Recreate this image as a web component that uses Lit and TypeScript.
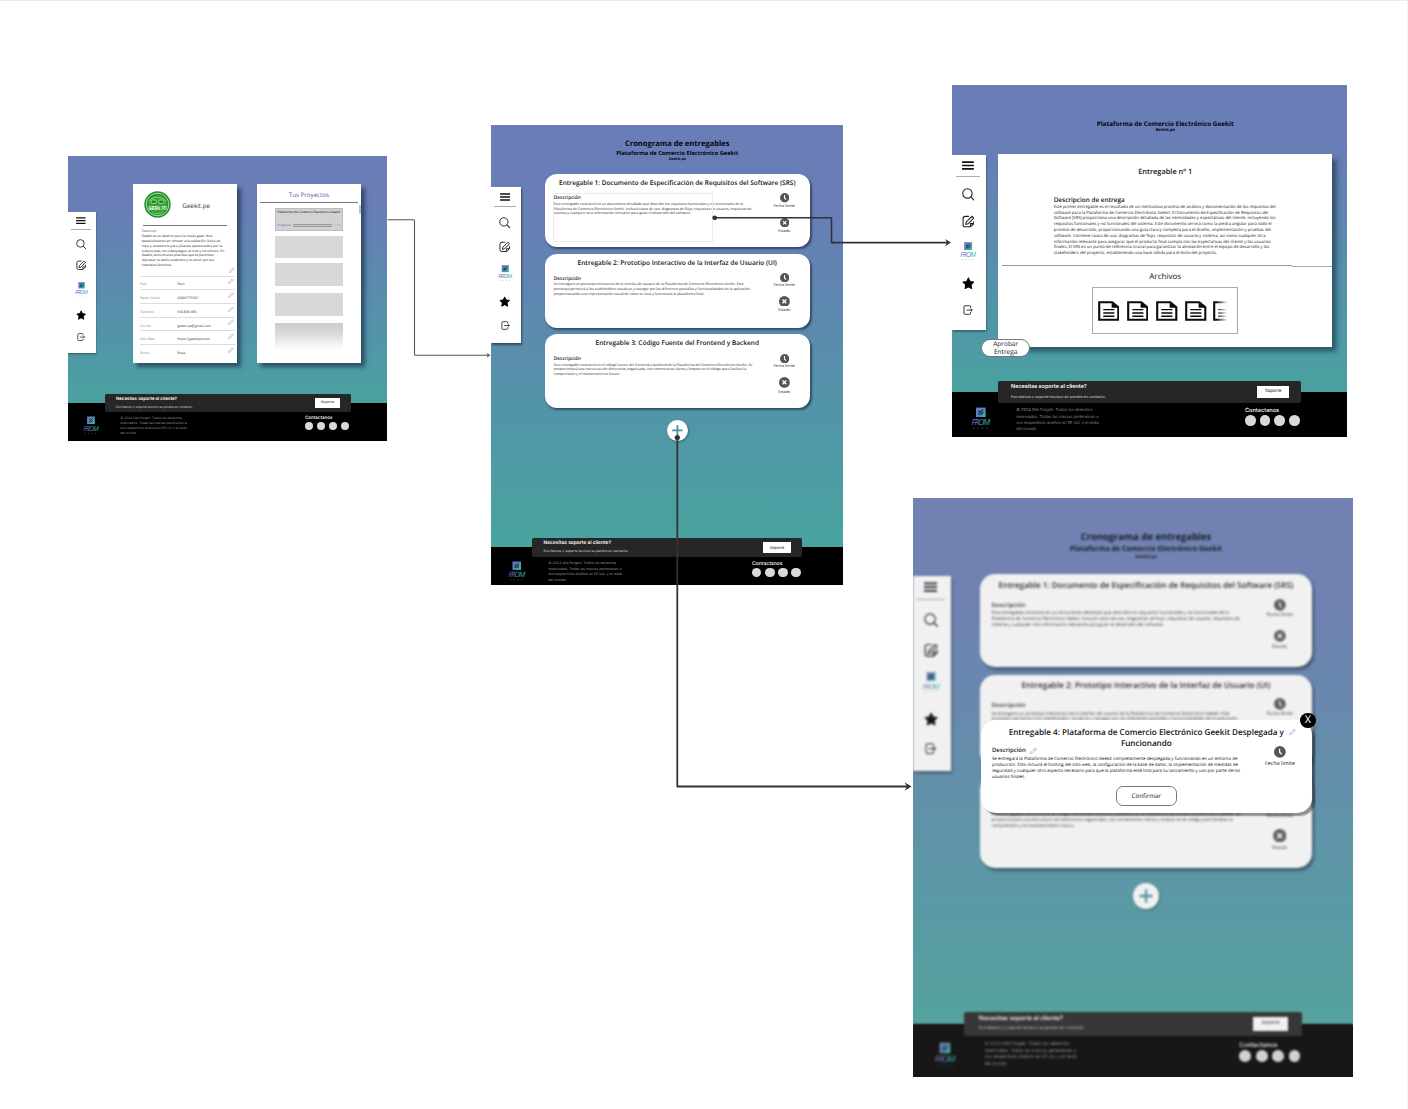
import { LitElement, html, svg, css } from "lit";
import { customElement, property } from "lit/decorators.js";

const PLATFORM = "Plataforma de Comercio Electrónico Geekit";

const pencil = html`<svg class="pencil" viewBox="0 0 12 12"><path d="M.8 11.2 L2 8 L8.6 1.8 L10.8 3.8 L4 10 Z M7.2 3.2 L9.4 5.2" fill="none" stroke="#b191e0" stroke-width="1.1"/></svg>`;
const clock = html`<svg class="clock" viewBox="0 0 20 20"><circle cx="10" cy="10" r="10" fill="#555"/><path d="M9.6 4.5 V10.5 L13 14" fill="none" stroke="#fff" stroke-width="2.2"/></svg>`;
const cross = (cls: string) => html`<svg class=${cls} viewBox="0 0 20 20"><circle cx="10" cy="10" r="10" fill="#555"/><path d="M6.5 6.5 L13.5 13.5 M13.5 6.5 L6.5 13.5" stroke="#fff" stroke-width="2.4"/></svg>`;
const lines = (rows: string[]) => rows.map((r) => html`<div class="ln">${r}</div>`);

@customElement("frog-logo")
export class FrogLogo extends LitElement {
  static styles = css`
    :host { display: block; width: 18px; height: 20px; }
    svg { display: block; width: 100%; height: 100%; overflow: visible; }
    .word { font: italic 500 7.6px "Open Sans", sans-serif; }
  `;
  render() {
    return html`<svg viewBox="0 0 18 20">
      <defs>
        <linearGradient id="sq" x1="0" y1="0" x2="1" y2="1"><stop offset="0" stop-color="#7c66bd"/><stop offset=".5" stop-color="#4f8db3"/><stop offset="1" stop-color="#36c0a0"/></linearGradient>
        <linearGradient id="wd" x1="0" y1="0" x2="1" y2="0"><stop offset="0" stop-color="#8a5fd0"/><stop offset=".5" stop-color="#4c8fc0"/><stop offset="1" stop-color="#27c795"/></linearGradient>
      </defs>
      <rect x="4.6" y="0" width="8.8" height="8.6" fill="url(#sq)"/>
      <path d="M6.6 6.6 L11 2 M7 4 C8 2 9 4.4 8 5.4 M8.4 6.4 C10 6.6 10.6 5 11.4 4.2" fill="none" stroke="#17324e" stroke-width="1.1"/>
      <text class="word" x="0.4" y="16.3" textLength="17.2" fill="url(#wd)">FROM</text>
      <path d="M2 19 h1 M6 19 h1 M10 19 h1 M14 19 h1" stroke="#5f9bbb" stroke-width=".8" stroke-opacity=".8"/>
    </svg>`;
  }
}

@customElement("side-rail")
export class SideRail extends LitElement {
  static styles = css`
    :host { display: block; zoom: var(--k); flex: none; }
    .rail { box-sizing: border-box; width: 30.4px; height: 156px; padding-right: 1.4px; background: #fff; box-shadow: 0.5px 1.5px 2px rgba(0,0,0,.45);
      display: flex; flex-direction: column; align-items: center; }
    svg { display: block; flex: none; }
    .menu { width: 10.6px; height: 8px; margin-top: 5.2px; }
    .rule { width: 22px; height: .7px; background: #aaa; margin-top: 5.6px; }
    .search { width: 11.5px; height: 11.5px; margin-top: 10.3px; }
    .edit { width: 11.5px; height: 11.5px; margin-top: 12.3px; }
    frog-logo { width: 14.5px; height: 16.5px; margin-top: 12.4px; }
    .star { width: 11.4px; height: 11.4px; margin-top: 14.8px; }
    .exit { width: 9px; height: 9px; margin-top: 13.4px; }
  `;
  render() {
    return html`<nav class="rail">
      <svg class="menu" viewBox="0 0 21 16"><path d="M0 2 H21 M0 8 H21 M0 14 H21" stroke="#111" stroke-width="2.8"/></svg>
      <div class="rule"></div>
      <svg class="search" viewBox="0 0 22 22"><circle cx="9.3" cy="9.3" r="8" fill="none" stroke="#222" stroke-width="1.8"/><path d="M15 15 L21 21" stroke="#222" stroke-width="2"/></svg>
      <svg class="edit" viewBox="0 0 24 24" fill="none" stroke="#1c1c1c" stroke-width="2"><path d="M13 2.5 H6 Q2 2.5 2 6.5 V18 Q2 22 6 22 H16 L22 16 V11"/><path d="M7 17.5 L8 13 L18.5 2.5 L22 5.5 L11.5 16.5 Z M16 21.5 V16 H21.5"/></svg>
      <frog-logo></frog-logo>
      <svg class="star" viewBox="0 0 24 24"><path d="M12 2 L15.1 8.4 L22 9.4 L17 14.4 L18.2 21.6 L12 18.2 L5.8 21.6 L7 14.4 L2 9.4 L8.9 8.4 Z" fill="#000" stroke="#000" stroke-width="2" stroke-linejoin="round"/></svg>
      <svg class="exit" viewBox="0 0 20 20" fill="none" stroke="#222" stroke-width="1.8"><path d="M15 6 V3.5 Q15 1.5 13 1.5 H4 Q2 1.5 2 3.5 V16.5 Q2 18.5 4 18.5 H13 Q15 18.5 15 16.5 V14 M7 10 H18.5 M15.6 7 L18.6 10 L15.6 13"/></svg>
    </nav>`;
  }
}

@customElement("site-footer")
export class SiteFooter extends LitElement {
  static styles = css`
    :host { display: block; zoom: var(--k); width: 352px; height: 42.4px; font-family: Inter, "Open Sans", sans-serif; text-rendering: geometricPrecision; white-space: nowrap; }
    .foot { height: 100%; background: #000; display: flex; flex-direction: column; }
    .bar { flex: none; box-sizing: border-box; margin: -9.4px 0 0 41px; width: 270.6px; height: 19.2px; border-radius: 1.8px; background: #262626; padding: 0 11.3px 0 11.9px;
      display: flex; justify-content: space-between; align-items: center; }
    .ask { color: #fff; font-weight: 600; font-size: 4.85px; line-height: 7px; padding-top: .8px; }
    .sub { color: #d5d5d5; font-size: 3.4px; line-height: 7px; padding-top: 1px; }
    .btn { width: 28px; height: 11px; background: #fff; color: #222; font-size: 3.9px; line-height: 11px; text-align: center; }
    .row { display: flex; padding: 4.3px 0 0 17px; }
    frog-logo { width: 17.5px; height: 20.5px; }
    .copy { margin-left: 23px; width: 203.8px; color: #8d8d8d; font-size: 3.56px; line-height: 5.5px; }
    .contact { color: #fff; font-size: 5px; font-weight: 500; line-height: 6px; padding-top: .3px; }
    .dots { display: flex; gap: 3.75px; margin-top: .4px; }
    .dot { width: 9.4px; height: 9.4px; border-radius: 50%; background: #d9d9d9; }
  `;
  render() {
    return html`<footer class="foot">
      <div class="bar">
        <div><div class="ask">Necesitas soporte al cliente?</div><div class="sub">Escribenos y soporte tecnico se pondra en contacto.</div></div>
        <div class="btn">Soporte</div>
      </div>
      <div class="row">
        <frog-logo></frog-logo>
        <div class="copy">${lines(["© 2024 Site Forgeh. Todos los derechos", "reservados. Todas las marcas pertenecen a", "sus respectivos dueños en EE.UU. y el resto", "del mundo"])}</div>
        <div><div class="contact">Contactanos</div>
          <div class="dots">${[0, 1, 2, 3].map(() => html`<div class="dot"></div>`)}</div></div>
      </div>
    </footer>`;
  }
}

interface Deliverable { title: string; body: string[]; cls: string; }
const DELIVERABLES: Deliverable[] = [
  { title: "Entregable 1: Documento de Especificación de Requisitos del Software (SRS)", cls: "first",
    body: ["Este entregable consistirá en un documento detallado que describe los requisitos funcionales y no funcionales de la", "Plataforma de Comercio Electrónico Geekit. Incluirá casos de uso, diagramas de flujo, requisitos de usuario, requisitos de", "sistema y cualquier otra información relevante para guiar el desarrollo del software."] },
  { title: "Entregable 2: Prototipo Interactivo de la Interfaz de Usuario (UI)", cls: "second",
    body: ["Se entregará un prototipo interactivo de la interfaz de usuario de la Plataforma de Comercio Electrónico Geekit. Este", "prototipo permitirá a los stakeholders visualizar y navegar por las diferentes pantallas y funcionalidades de la aplicación,", "proporcionando una representación visual de cómo se verá y funcionará la plataforma final."] },
  { title: "Entregable 3: Código Fuente del Frontend y Backend", cls: "third",
    body: ["Este entregable consistirá en el código fuente del frontend y backend de la Plataforma de Comercio Electrónico Geekit. Se", "proporcionará una estructura de directorios organizada, con comentarios claros y limpios en el código para facilitar la", "comprensión y el mantenimiento futuro."] },
];

const cardStyles = css`
  .card { box-sizing: border-box; width: 265px; height: 73.9px; border-radius: 12px; background: #fff; box-shadow: 1.6px 2px 2px rgba(20,30,50,.55); padding-top: 4.3px; }
  .title { text-align: center; font-weight: 600; font-size: 6.5px; line-height: 10px; color: #111; }
  .cols { display: flex; justify-content: space-between; padding: 0 10.5px 0 9px; }
  .desc { font-weight: 600; font-size: 4.8px; line-height: 6px; color: #222; margin-top: 7.4px; }
  .body { font-size: 3.53px; line-height: 4.6px; color: #222; margin-top: 1.8px; }
  .side { width: 30px; display: flex; flex-direction: column; align-items: center; padding-top: 5.6px; font-size: 3.8px; line-height: 5px; color: #222; }
  .clock { width: 9.4px; height: 9.4px; margin-bottom: .9px; }
  .x { width: 10.8px; height: 10.8px; margin: 7.8px 0 1.7px; }
  .x.small { width: 9.4px; height: 9.4px; margin: 9.1px 0 1.9px; }
  .second .side { padding-top: 4.4px; }
`;

@customElement("schedule-view")
export class ScheduleView extends LitElement {
  @property({ type: Boolean }) outlined = false;
  static styles = [cardStyles, css`
    :host { display: block; zoom: var(--k); width: 265px; margin-left: 23.7px; white-space: nowrap; text-rendering: geometricPrecision; font-family: "Open Sans", "Noto Sans", sans-serif; }
    .head { text-align: center; font-weight: 700; color: #05070d; }
    .h1 { font-size: 7.55px; line-height: 10px; padding-top: 13.8px; }
    .h2 { font-size: 5.7px; line-height: 8px; padding-top: .4px; }
    .h3 { font-size: 3.6px; line-height: 5px; }
    .cards { display: flex; flex-direction: column; gap: 6.4px; margin-top: 11.4px; }
    .left { box-sizing: border-box; }
    .outlined .left { width: 158.5px; height: 47px; outline: .6px solid #ececec; margin-top: 6.2px; }
    .outlined .desc { margin-top: 1.2px; }
    .add { width: 20.8px; height: 20.8px; margin: 12px auto 0; border-radius: 50%; background: #fff; box-shadow: .8px 1px 2px rgba(0,0,0,.35); }
    .add svg { display: block; width: 100%; height: 100%; }
  `];
  render() {
    return html`
      <div class="head"><div class="h1">Cronograma de entregables</div><div class="h2">${PLATFORM}</div><div class="h3">Geekit.pe</div></div>
      <div class="cards">${DELIVERABLES.map((d, i) => html`
        <div class="card ${d.cls} ${this.outlined && i === 0 ? "outlined" : ""}">
          <div class="title">${d.title}</div>
          <div class="cols">
            <div class="left"><div class="desc">Descripción</div><div class="body">${lines(d.body)}</div></div>
            <div class="side">${clock}<div>Fecha límite</div>${cross(i === 0 ? "x small" : "x")}<div>Estado</div></div>
          </div>
        </div>`)}</div>
      <div class="add"><svg viewBox="0 0 20 20"><path d="M10 5 V15 M5 10 H15" stroke="#4a93a6" stroke-width="1.8"/></svg></div>`;
  }
}

@customElement("deliverable-dialog")
export class DeliverableDialog extends LitElement {
  static styles = [cardStyles, css`
    :host { display: block; position: relative; zoom: var(--k); width: 265px; white-space: nowrap; text-rendering: geometricPrecision; font-family: "Open Sans", "Noto Sans", sans-serif; }
    .card { height: 74.6px; padding-top: 5.9px; box-shadow: 2.4px 2.4px 1.2px rgba(0,0,0,.4); }
    .title { line-height: 9px; }
    .desc { margin-top: -1.9px; display: flex; gap: 3px; align-items: center; }
    .body { line-height: 4.75px; margin-top: 2px; color: #111; }
    .side { padding-top: 0; margin-top: -2.6px; font-size: 4.3px; }
    .clock { margin-bottom: 1.4px; }
    .pencil { width: 5.8px; height: 5.8px; }
    .edit { position: absolute; right: 12.3px; top: 7px; display: flex; }
    .ok { box-sizing: border-box; width: 48.5px; height: 16px; margin: 4.2px auto 0; border: .6px solid #777; border-radius: 5.5px; text-align: center; font-size: 5px; line-height: 14.6px; color: #111; }
    .close { position: absolute; right: -3px; top: -5.6px; width: 12.4px; height: 12.4px; border-radius: 50%; background: #000; color: #fff; font-size: 8.6px; line-height: 12.4px; text-align: center; }
  `];
  render() {
    return html`<div class="card">
        <div class="title"><div>Entregable 4: Plataforma de Comercio Electrónico Geekit Desplegada y</div><div>Funcionando</div></div>
        <div class="cols">
          <div><div class="desc">Descripción ${pencil}</div><div class="body">${lines(["Se entregará la Plataforma de Comercio Electrónico Geekit completamente desplegada y funcionando en un entorno de", "producción. Esto incluirá el hosting del sitio web, la configuración de la base de datos, la implementación de medidas de", "seguridad y cualquier otro aspecto necesario para que la plataforma esté lista para su lanzamiento y uso por parte de los", "usuarios finales."])}</div></div>
          <div class="side">${clock}<div>Fecha límite</div></div>
        </div>
        <div class="ok">Confirmar</div>
      </div>
      <div class="edit">${pencil}</div>
      <div class="close">X</div>`;
  }
}

@customElement("project-view")
export class ProjectView extends LitElement {
  static styles = css`
    :host { display: flex; gap: 20.2px; margin: 28.3px 0 0 37.9px; white-space: nowrap; text-rendering: geometricPrecision; font-family: "Open Sans", "Noto Sans", sans-serif; color: #333; }
    .panel { box-sizing: border-box; width: 103.5px; height: 178.5px; background: #fff; box-shadow: 4px 4px 4px rgba(25,45,70,.65); }
    .who { display: flex; align-items: center; gap: 10.8px; height: 40.8px; padding-left: 11px; font-size: 6.3px; }
    .who span { padding-top: 2.4px; }
    .badge { width: 27px; height: 27px; display: block; overflow: visible; }
    .badge text { font: 700 5.4px "Liberation Sans", sans-serif; }
    .hr { height: .8px; background: #777; margin: 0 9.5px; }
    .info { display: flex; flex-direction: column; padding: 2.6px 9px 0 8.2px; }
    .label { font-size: 3.4px; line-height: 5px; color: #666; }
    .about { font-size: 3.45px; line-height: 4.72px; padding-top: 2px; color: #222; }
    .pencil { display: block; width: 6px; height: 6px; }
    .first { align-self: flex-end; margin: -1.3px -6.6px 0 0; }
    .rows { padding: 2.4px 2px 0 6.5px; }
    .row { display: grid; grid-template-columns: 37.3px 50.6px 6px; height: 13.7px; align-items: center; font-size: 3.4px; border-top: .6px solid #ddd; box-sizing: border-box; padding-top: 2px; }
    .row .pencil { margin-top: -5.6px; }
    .k { color: #888; }
    .proj { display: flex; }
    .main { flex: 1; display: flex; flex-direction: column; align-items: center; }
    .thumb { width: 1.6px; height: 9px; margin: 20.5px 0 0 -1.6px; background: #c4c4c8; }
    .ptitle { color: #4859b4; font-size: 6.2px; line-height: 9px; padding-top: 6px; }
    .phr { width: 98px; height: .7px; margin-top: 2.3px; background: #777; }
    .item { box-sizing: border-box; width: 68.4px; height: 22.8px; background: #d8d8d8; }
    .open { margin: 5.6px 0 5px; border: .5px solid #bbb; background: #d2d2d2; padding: 1.6px 1.6px; font-size: 3.15px; line-height: 5px; color: #000; font-weight: 500; }
    .prog { display: flex; align-items: center; gap: 2.2px; padding-top: 7.2px; color: #4868c8; font-size: 3.1px; }
    .track { width: 40px; height: 3px; border-radius: 1px; background: #c8c8c8; border: .5px solid #999; box-sizing: border-box; }
    .pct { color: #b48ad8; }
    .i2 { margin-top: 4.4px; } .i3 { margin-top: 7.2px; }
    .i4 { margin-top: 7px; height: 27px; background: linear-gradient(#cdcdcd, #d8d8d8 35%, #fff); }
  `;
  render() {
    const rows = [["País", "Perú"], ["Razón Social", "20609779301"], ["Teléfono", "934 836 455"], ["Correo", "geekit.pe@gmail.com"], ["Sitio Web", "https://geekitpe.com"], ["Rubro", "Ropa"]];
    return html`
      <section class="panel">
        <div class="who"><svg class="badge" viewBox="0 0 27 27"><circle cx="13.5" cy="13.5" r="13.2" fill="#1e8f2d"/><circle cx="13.5" cy="13.5" r="11.3" fill="none" stroke="#d4efd0" stroke-width=".8"/><circle cx="13.5" cy="13.5" r="9.7" fill="#35a534"/><path d="M5 10 C8 5 19 5 22 10" fill="none" stroke="#96db87" stroke-width=".8"/><rect x="7" y="9" width="5.4" height="3.4" rx="1.4" fill="#1d7d27" stroke="#cdf0c6" stroke-width=".7"/><rect x="14.6" y="9" width="5.4" height="3.4" rx="1.4" fill="#1d7d27" stroke="#cdf0c6" stroke-width=".7"/><path d="M8 21.2 Q13.5 24.5 19 21.2" fill="none" stroke="#9edc91" stroke-width=".7"/><text x="4.2" y="19.1" textLength="18.6" lengthAdjust="spacingAndGlyphs" fill="#fff">GEEK IT!</text></svg><span>Geekit.pe</span></div>
        <div class="hr"></div>
        <div class="info"><div class="label">Resumen</div>
          <div class="about">${lines(["Geekit es su destino para la moda geek. Nos", "especializamos en ofrecer una selección única de", "ropa y accesorios para jóvenes apasionados por la", "cultura pop, los videojuegos, el cine y los cómics. En", "Geekit, encontrarás prendas que te permitan", "expresar tu estilo auténtico y tu amor por tus", "intereses favoritos."])}</div>
          <div class="first">${pencil}</div></div>
        <div class="rows">${rows.map(([k, v]) => html`<div class="row"><span class="k">${k}</span><span>${v}</span>${pencil}</div>`)}</div>
      </section>
      <section class="panel proj">
        <div class="main">
          <div class="ptitle">Tus Proyectos</div><div class="phr"></div>
          <div class="item open">${PLATFORM}<div class="prog">Progreso:<div class="track"></div><span class="pct">17%</span></div></div>
          <div class="item"></div><div class="item i2"></div><div class="item i3"></div><div class="item i4"></div>
        </div>
        <div class="thumb"></div>
      </section>`;
  }
}

@customElement("delivery-view")
export class DeliveryView extends LitElement {
  static styles = css`
    :host { display: block; margin-left: 12.2px; width: 334.4px; white-space: nowrap; text-rendering: geometricPrecision; font-family: "Open Sans", "Noto Sans", sans-serif; color: #111; position: relative; }
    .head { text-align: center; font-weight: 700; color: #05070d; }
    .h2 { font-size: 6.4px; line-height: 9px; padding-top: 33.6px; }
    .h3 { font-size: 4.1px; line-height: 5px; }
    .sheet { box-sizing: border-box; height: 192.7px; margin-top: 21.5px; background: #fff; box-shadow: 4.5px 4.5px 5px rgba(15,45,65,.6); display: flex; flex-direction: column; align-items: center; }
    .name { font-size: 7.4px; font-weight: 600; line-height: 10px; padding-top: 12.6px; }
    .text { width: 223px; margin-top: 18.3px; }
    .sub { font-size: 6.4px; font-weight: 600; line-height: 9px; }
    .body { font-size: 4.2px; line-height: 5.78px; color: #222; padding-top: .9px; }
    .split { align-self: stretch; display: flex; margin: 7.8px 0 0 4px; height: 2px; }
    .a { width: 290px; border-top: 1px solid #999; } .b { flex: 1; border-bottom: 1px solid #aaa; }
    .arch { font-size: 8px; line-height: 11px; padding-top: 4.6px; }
    .files { box-sizing: border-box; width: 146.5px; height: 46.5px; margin-top: 5px; border: 1px solid #aaa; padding-left: 4.9px; display: flex; align-items: center; gap: 7.6px; }
    .doc { width: 21.5px; height: 20px; flex: none; }
    .fade { margin-left: -1.5px; mask-image: linear-gradient(90deg, #000 15%, transparent 68%); -webkit-mask-image: linear-gradient(90deg, #000 15%, transparent 68%); }
    .ok { position: absolute; left: -16.8px; top: 253.8px; box-sizing: border-box; width: 49px; height: 18.6px; border: .7px solid #777; border-radius: 9.3px; background: #fff; text-align: center; font-size: 6.5px; line-height: 8.6px; }
  `;
  render() {
    const doc = (c: string) => html`<svg class="doc ${c}" viewBox="0 0 21.5 20"><path d="M1.2 1.3 H14.3 L20.3 6.2 V18.7 H1.2 Z" fill="#fff" stroke="#0a0a0a" stroke-width="2.1"/><path d="M13.6 1.4 V6.8 H20 Z" fill="#0a0a0a"/><path d="M5.3 8.6 H16.4 M5.3 12 H16.4 M5.3 15.2 H16.4" stroke="#0a0a0a" stroke-width="1.4"/></svg>`;
    return html`
      <div class="head"><div class="h2">${PLATFORM}</div><div class="h3">Geekit.pe</div></div>
      <div class="sheet">
        <div class="name">Entregable nº 1</div>
        <div class="text"><div class="sub">Descripcion de entrega</div><div class="body">${lines([
          "Este primer entregable es el resultado de un meticuloso proceso de análisis y documentación de los requisitos del",
          "software para la Plataforma de Comercio Electrónico Geekit. El Documento de Especificación de Requisitos del",
          "Software (SRS) proporciona una descripción detallada de las necesidades y expectativas del cliente, incluyendo los",
          "requisitos funcionales y no funcionales del sistema. Este documento servirá como la piedra angular para todo el",
          "proceso de desarrollo, proporcionando una guía clara y completa para el diseño, implementación y pruebas del",
          "software. Contiene casos de uso, diagramas de flujo, requisitos de usuario y sistema, así como cualquier otra",
          "información relevante para asegurar que el producto final cumpla con las expectativas del cliente y los usuarios",
          "finales. El SRS es un punto de referencia crucial para garantizar la alineación entre el equipo de desarrollo y los",
          "stakeholders del proyecto, estableciendo una base sólida para el éxito del proyecto."])}</div></div>
        <div class="split"><div class="a"></div><div class="b"></div></div>
        <div class="arch">Archivos</div>
        <div class="files">${["", "", "", "", "fade"].map(doc)}</div>
      </div>
      <div class="ok"><div>Aprobar</div><div>Entrega</div></div>`;
  }
}

@customElement("app-root")
export class AppRoot extends LitElement {
  static styles = css`
    :host { display: block; }
    .board { box-sizing: border-box; position: relative; width: 1408px; height: 1109px; background: #fff; border-top: 1px solid #ebebeb; border-right: 1px solid #f3f3f3; overflow: hidden; }
    .frame { position: absolute; overflow: hidden; display: flex; flex-direction: column; background: linear-gradient(#697db6 0%, #697db6 18%, #5f86b0 36%, #5196a8 65%, #49a29f 88%, #49a49f 100%); }
    .stage { display: flex; flex: none; height: calc(var(--top) * var(--k)); }
    side-rail { margin-top: var(--rail, 62.4px); }
    .f1 { --k: .907; --top: 272.3px; --rail: 61.6px; left: 68px; top: 155px; width: 319.3px; height: 285px; }
    .f2 { --k: 1; --top: 422px; left: 490.7px; top: 124px; width: 352.3px; height: 460px; }
    .f3 { --k: 1.1225; --top: 273.2px; left: 951.7px; top: 84px; width: 395.3px; height: 352px; }
    .f4 { --k: 1.25; --top: 421.2px; left: 912.7px; top: 496.5px; width: 440.3px; height: 579.5px;
      background: linear-gradient(#697db6 0, #697db6 104px, #5f86b0 209px, #5196a8 377px, #49a29f 510px, #49a39f 526px, #000 528px); }
    .f4 schedule-view { margin-top: 12.9px; }
    .f4 side-rail, .f4 schedule-view, .f4 site-footer { filter: blur(.85px); }
    .veil { position: absolute; inset: 0; background: rgba(159,159,159,.145); }
    .modal { position: absolute; left: 68px; top: 222px; }
    .wires { position: absolute; left: 0; top: -1px; width: 1408px; height: 1109px; pointer-events: none; }
  `;
  private wire(d: string, tip: [number, number], w: number, c: string, s: number) {
    const [x, y] = tip;
    return svg`<path d=${d} fill="none" stroke=${c} stroke-width=${w} stroke-linejoin="round"/>
      <path d="M${x} ${y} l${-s} ${-s * 0.62} l${s * 0.35} ${s * 0.62} l${-s * 0.35} ${s * 0.62} Z" fill=${c}/>`;
  }
  render() {
    return html`<main class="board">
      <div class="frame f1"><div class="stage"><side-rail></side-rail><project-view></project-view></div><site-footer></site-footer></div>
      <div class="frame f2"><div class="stage"><side-rail></side-rail><schedule-view outlined></schedule-view></div><site-footer></site-footer></div>
      <div class="frame f3"><div class="stage"><side-rail></side-rail><delivery-view></delivery-view></div><site-footer></site-footer></div>
      <div class="frame f4"><div class="stage"><side-rail></side-rail><schedule-view></schedule-view></div><site-footer></site-footer>
        <div class="veil"></div><div class="modal"><deliverable-dialog></deliverable-dialog></div></div>
      <svg class="wires" viewBox="0 0 1408 1109">
        ${this.wire("M387.5 219.8 H413.5 Q414.5 219.8 414.5 220.8 V354.2 Q414.5 355.2 415.5 355.2 H488", [490.5, 355.2], 1.1, "#555", 4)}
        ${this.wire("M714.7 217.8 H831.5 V242.6 H948", [951, 242.6], 1.6, "#333", 6)}
        ${this.wire("M677.3 437.5 V786.5 H908", [911.5, 786.5], 1.8, "#333", 7)}
        <circle cx="714.7" cy="217.8" r="2.4" fill="#333"/><circle cx="677.3" cy="437.5" r="2.6" fill="#333"/>
      </svg>
    </main>`;
  }
}
